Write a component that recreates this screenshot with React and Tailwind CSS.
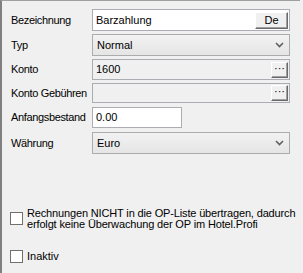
import React from 'react';

const Chevron = () => (
  <svg width="9" height="6" viewBox="0 0 9 6" className="mr-[5px]">
    <path d="M1 1 L4.5 4.5 L8 1" fill="none" stroke="#606060" strokeWidth="1.6" />
  </svg>
);

const DotsButton = () => (
  <div className="w-[17px] h-[16px] mr-[1px] bg-[#f0f0f0] border-t border-l border-t-white border-l-white border-r border-b border-r-[#696969] border-b-[#696969] shadow-[inset_-1px_-1px_0_#a0a0a0] flex items-center justify-center text-[11px] leading-none pb-[3px]">
    ···
  </div>
);

const Label = ({ children }) => (
  <div className="w-[81px] shrink-0 text-[11px] tracking-[-0.35px] whitespace-nowrap text-black">{children}</div>
);

const Select = ({ value }) => (
  <div className="w-[198px] h-[22px] border border-[#acacac] bg-gradient-to-b from-[#f2f2f2] to-[#e5e5e5] flex items-center justify-between pl-[4px]">
    <span className="text-[11px]">{value}</span>
    <Chevron />
  </div>
);

const Checkbox = () => (
  <div className="w-[13px] h-[13px] shrink-0 border border-[#707070] bg-white" />
);

export default function App() {
  return (
    <div
      className="w-[303px] h-[273px] bg-[#f0f0f0] text-black overflow-hidden"
      style={{ fontFamily: '"Liberation Sans", Arial, sans-serif' }}
    >
      <div className="w-[300px] h-[273px] border-t border-l-2 border-t-[#a0a0a0] border-l-[#808080] pl-[9px] pt-[8px]">
        <div className="flex items-center h-[22px]">
          <Label>Bezeichnung</Label>
          <div className="w-[198px] h-[22px] border border-[#abadb3] bg-white flex items-center justify-between pl-[3px] pr-[1px]">
            <span className="text-[11px]">Barzahlung</span>
            <div className="w-[33px] h-[17px] bg-[#f0f0f0] border-t border-l border-t-white border-l-white border-r border-b border-r-[#696969] border-b-[#696969] shadow-[inset_-1px_-1px_0_#a0a0a0] flex items-center justify-center text-[11px]">
              De
            </div>
          </div>
        </div>

        <div className="flex items-center mt-[3px]">
          <Label>Typ</Label>
          <Select value="Normal" />
        </div>

        <div className="flex items-center mt-[3px]">
          <Label>Konto</Label>
          <div className="w-[198px] h-[21px] border border-[#abadb3] bg-[#f0f0f0] flex items-center justify-between pl-[3px]">
            <span className="text-[11px]">1600</span>
            <DotsButton />
          </div>
        </div>

        <div className="flex items-center mt-[3px]">
          <Label>Konto Gebühren</Label>
          <div className="w-[198px] h-[20px] border border-[#abadb3] bg-[#f0f0f0] flex items-center justify-end">
            <DotsButton />
          </div>
        </div>

        <div className="flex items-center mt-[4px]">
          <Label>Anfangsbestand</Label>
          <div className="w-[90px] h-[21px] border border-[#abadb3] bg-white flex items-center pl-[3px]">
            <span className="text-[11px]">0.00</span>
          </div>
        </div>

        <div className="flex items-center mt-[4px]">
          <Label>Währung</Label>
          <Select value="Euro" />
        </div>

        <div className="flex items-start mt-[54px] -ml-[1px]">
          <div className="mt-[4px]">
            <Checkbox />
          </div>
          <div className="ml-[4px] text-[11px] leading-[11px] tracking-[-0.15px]">
            Rechnungen NICHT in die OP-Liste übertragen, dadurch
            <br />
            erfolgt keine Überwachung der OP im Hotel.Profi
          </div>
        </div>

        <div className="flex items-center mt-[18px] -ml-[1px]">
          <Checkbox />
          <span className="ml-[4px] text-[11px]">Inaktiv</span>
        </div>
      </div>
    </div>
  );
}
